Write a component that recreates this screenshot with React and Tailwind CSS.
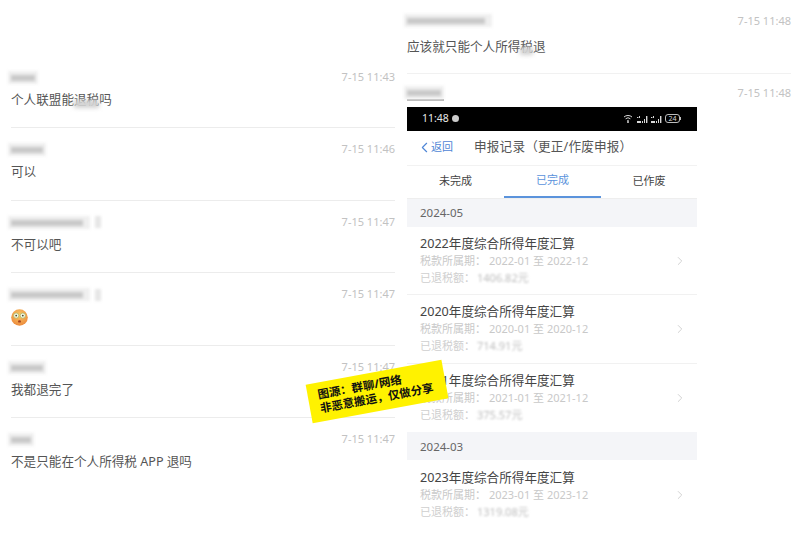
import React from "react";
import { ChevronLeft, ChevronRight } from "lucide-react";

const FONT = "font-['Noto_Sans','Noto_Sans_CJK_SC',sans-serif]";

// pixelated nickname: light box with a darker streak through it
function BlurName({ width, dark, tail }) {
  return (
    <div className="flex h-[13px] items-center gap-[5px] -ml-[3px]">
      <div className="relative h-[13px] bg-[#efefef] blur-[1.5px]" style={{ width }}>
        <div className="absolute left-[3px] top-[4px] h-[6px] bg-[#c9c9c9]" style={{ width: dark }} />
      </div>
      {tail && <div className="h-[12px] w-[6px] bg-[#e6e6e6] blur-[1.5px]" />}
    </div>
  );
}

// word with a smudge over its lower half
function Smudge({ children }) {
  return (
    <span className="relative">
      {children}
      <span className="absolute inset-x-0 top-[9px] h-[8px] bg-[#d2d2d2] blur-[2px]" />
    </span>
  );
}

function Flushed() {
  return (
    <svg width="17" height="17" viewBox="0 0 17 17" className="block">
      <defs>
        <radialGradient id="face" cx="50%" cy="35%" r="65%">
          <stop offset="0%" stopColor="#f9c866" />
          <stop offset="100%" stopColor="#ec8a3c" />
        </radialGradient>
      </defs>
      <circle cx="8.5" cy="8.5" r="8.3" fill="url(#face)" />
      <circle cx="5.2" cy="6.6" r="2.6" fill="#f4f7e4" stroke="#a8b45c" strokeWidth="0.7" />
      <circle cx="11.8" cy="6.6" r="2.6" fill="#f4f7e4" stroke="#a8b45c" strokeWidth="0.7" />
      <circle cx="5.2" cy="6.6" r="0.9" fill="#4b4b2e" />
      <circle cx="11.8" cy="6.6" r="0.9" fill="#4b4b2e" />
      <ellipse cx="8.5" cy="12.4" rx="1.5" ry="1.2" fill="#a5411e" />
    </svg>
  );
}

function Message({ name, time, children, last }) {
  return (
    <div className={`flex h-[72.5px] flex-col ${last ? "" : "border-b border-[#ececec]"}`}>
      <div className="flex h-[42px] items-start justify-between pt-[14px]">
        <div className="pt-[1px]">{name}</div>
        <span className="text-[11px] leading-[13px] text-[#c2c2c2]">{time}</span>
      </div>
      <div className="-mt-[7px] text-[12.6px] leading-[18px] text-[#555555]">{children}</div>
    </div>
  );
}

function StatusIcons() {
  return (
    <div className="flex items-center gap-[3px] text-[#d8d8d8]">
      <svg width="11" height="9" viewBox="0 0 11 9" fill="none" stroke="currentColor" strokeWidth="1">
        <path d="M1 3a6 6 0 0 1 8 0M2.6 4.8a3.6 3.6 0 0 1 4.8 0M4.3 6.6a1.4 1.4 0 0 1 1.4-.2" />
        <circle cx="5" cy="8" r="0.6" fill="currentColor" />
      </svg>
      {[0, 1].map((i) => (
        <svg key={i} width="11" height="8" viewBox="0 0 11 8" fill="currentColor">
          <path d="M0 2h1.4v1H0zM2 1h1v2H2zM5 6h1v2H5zM7 4h1v4H7zM9 1h1.4v7H9zM0 6h4v2H0z" />
        </svg>
      ))}
      <div className="flex items-center">
        <span className="flex h-[9px] w-[15px] items-center justify-center rounded-[3px] border border-[#bdbdbd] text-[7px] leading-none">24</span>
        <span className="h-[3px] w-[1px] bg-[#bdbdbd]" />
      </div>
    </div>
  );
}

function Record({ title, from, to, refund, border }) {
  return (
    <div className={`flex h-[68.3px] items-center justify-between pl-[13px] pr-[10px] ${border ? "border-b border-[#f1f1f1]" : ""}`}>
      <div className="flex flex-col">
        <span className="text-[12.6px] leading-[16px] text-[#444444]">{title}</span>
        <span className="mt-[1px] text-[11px] leading-[16px] text-[#c9c9c9]">税款所属期： {from} 至 {to}</span>
        <span className="mt-[1px] flex text-[11px] leading-[16px] text-[#cfcfcf]">
          已退税额：<span className="ml-[2px] text-[#bdbdbd] blur-[1.2px]">{refund}</span>
        </span>
      </div>
      <ChevronRight size={14} strokeWidth={1.5} className="text-[#cccccc]" />
    </div>
  );
}

function Section({ children }) {
  return <div className="flex h-[28.5px] items-center bg-[#f4f5f8] pl-[13px] text-[11.5px] text-[#666666]">{children}</div>;
}

export default function App() {
  return (
    <div className={`relative flex h-[534px] w-[800px] gap-[12px] overflow-hidden bg-white pl-[11px] pr-[9px] ${FONT}`}>
      {/* left column */}
      <div className="w-[384px] pt-[55.5px]">
        <Message name={<BlurName width={30} dark={24} />} time="7-15 11:43">
          个人联盟能<Smudge>退税</Smudge>吗
        </Message>
        <Message name={<BlurName width={38} dark={32} />} time="7-15 11:46">可以</Message>
        <Message name={<BlurName width={82} dark={72} tail />} time="7-15 11:47">不可以吧</Message>
        <Message name={<BlurName width={82} dark={72} tail />} time="7-15 11:47">
          <div className="pt-[1px]"><Flushed /></div>
        </Message>
        <Message name={<BlurName width={38} dark={32} />} time="7-15 11:47">我都退完了</Message>
        <Message name={<BlurName width={26} dark={20} />} time="7-15 11:47" last>
          不是只能在个人所得税 APP 退吗
        </Message>
      </div>

      {/* right column */}
      <div className="w-[384px]">
        <div className="h-[73.5px] border-b border-[#f1f1f1]">
          <div className="flex h-[43px] items-start justify-between pt-[14px]">
            <BlurName width={88} dark={78} />
            <span className="text-[11px] leading-[13px] text-[#c2c2c2]">7-15 11:48</span>
          </div>
          <div className="-mt-[5px] text-[12.6px] leading-[18px] text-[#555555]">
            应该就只能个人所得<Smudge>税</Smudge>退
          </div>
        </div>
        <div className="flex h-[33px] items-start justify-between pt-[12px]">
          <div className="border-b-2 border-[#b5b5b5]">
            <BlurName width={40} dark={34} />
          </div>
          <span className="text-[11px] leading-[13px] text-[#c2c2c2]">7-15 11:48</span>
        </div>

        {/* phone screenshot */}
        <div className="w-[290px]">
          <div className="flex h-[24px] items-center justify-between bg-black pl-[15px] pr-[16px]">
            <span className="flex items-center gap-[3px] text-[10.5px] text-[#e8e8e8]">
              11:48
              <span className="h-[7px] w-[7px] rounded-full bg-[#cccccc]" />
            </span>
            <StatusIcons />
          </div>
          <div className="flex h-[35px] items-center border-b border-[#f2f2f2]">
            <div className="flex w-[67px] items-center pl-[9px] text-[11px] text-[#4f86d6]">
              <ChevronLeft size={17} strokeWidth={1.6} className="-mr-[2px]" />
              返回
            </div>
            <span className="text-[12.6px] tracking-[0.2px] text-[#555555]">申报记录（更正/作废申报）</span>
          </div>
          <div className="flex h-[33px] items-stretch border-b border-[#eeeeee] text-[11px] text-[#444444]">
            <div className="flex w-[97px] items-center justify-center">未完成</div>
            <div className="flex w-[97px] items-center justify-center border-b-2 border-[#5b93dc] text-[#5b93dc]">已完成</div>
            <div className="flex w-[96px] items-center justify-center">已作废</div>
          </div>
          <Section>2024-05</Section>
          <Record title="2022年度综合所得年度汇算" from="2022-01" to="2022-12" refund="1406.82元" border />
          <Record title="2020年度综合所得年度汇算" from="2020-01" to="2020-12" refund="714.91元" border />
          <Record title="2021年度综合所得年度汇算" from="2021-01" to="2021-12" refund="375.57元" />
          <Section>2024-03</Section>
          <Record title="2023年度综合所得年度汇算" from="2023-01" to="2023-12" refund="1319.08元" />
        </div>
      </div>

      {/* watermark sticker */}
      <div className="absolute left-[308px] top-[372px] flex h-[38.5px] w-[138px] -rotate-[10.4deg] flex-col justify-center bg-[#fff200] pl-[10px] text-[11.5px] font-bold leading-[14.5px] text-[#111111]">
        <span>图源：群聊/网络</span>
        <span>非恶意搬运，仅做分享</span>
      </div>
    </div>
  );
}
